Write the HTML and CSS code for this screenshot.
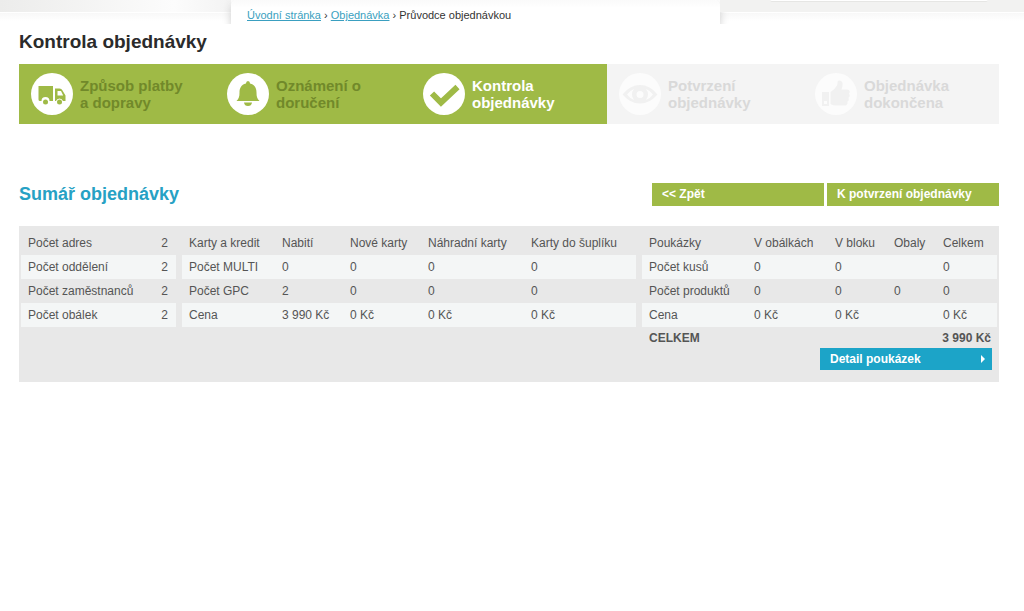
FILE: index.html
```
<!DOCTYPE html>
<html lang="cs">
<head>
<meta charset="utf-8">
<title>Kontrola objednávky</title>
<link rel="stylesheet" href="styles.css">
</head>
<body>
<header class="top">
  <div class="top-left"></div>
  <nav class="crumbs" aria-label="Drobečková navigace">
    <a href="#">Úvodní stránka</a> › <a href="#">Objednávka</a> › <span>Průvodce objednávkou</span>
  </nav>
  <div class="top-right"><div class="top-box"></div></div>
</header>
<main class="page">
  <h1 class="title">Kontrola objednávky</h1>
  <ol class="steps">
    <li class="step done">
      <svg class="icon" viewBox="0 0 42 42" aria-hidden="true">
        <circle cx="21" cy="21" r="21" fill="#fff"/>
        <path d="M7.500 13H22v15h-3.500a4 4 0 0 0-8 0H9q-1.500 0-1.500-1.500z" fill="#9fba46"/>
        <path fill-rule="evenodd" d="M24 15.500h4.500q2 0 3 2l3 5V28h-2.500a3.700 3.700 0 0 0-7 0h-1zM26.500 18v4.500h5.700L30 18z" fill="#9fba46"/>
        <circle cx="14.500" cy="29" r="2.500" fill="#9fba46"/>
        <circle cx="28.500" cy="29" r="2.500" fill="#9fba46"/>
      </svg>
      <span>Způsob platby<br>a dopravy</span>
    </li>
    <li class="step done">
      <svg class="icon" viewBox="0 0 42 42" aria-hidden="true">
        <circle cx="21" cy="21" r="21" fill="#fff"/>
        <path d="M21 8q2 0 2 2.500c5 1 6.500 5 6.500 9 0 4 .5 6 3 8.500H9.500c2.500-2.500 3-4.500 3-8.500 0-4 1.500-8 6.500-9Q19 8 21 8zM17 29.500h8q-.5 3.500-4 3.500t-4-3.500z" fill="#9fba46"/>
      </svg>
      <span>Oznámení o<br>doručení</span>
    </li>
    <li class="step current" aria-current="step">
      <svg class="icon" viewBox="0 0 42 42" aria-hidden="true">
        <circle cx="21" cy="21" r="21" fill="#fff"/>
        <path d="M9 20.500l9 9L34.500 14" fill="none" stroke="#9fba46" stroke-width="6"/>
      </svg>
      <span>Kontrola<br>objednávky</span>
    </li>
    <li class="step">
      <svg class="icon" viewBox="0 0 42 42" aria-hidden="true">
        <circle cx="21" cy="21" r="21" fill="#fcfcfc"/>
        <path d="M3.500 21.500Q11 12 21 12t17.500 9.500Q31 30.500 21 30.500T3.500 21.500z" fill="#f1f1f1"/>
        <path d="M8 21.500q3-4 7-5.500a8.500 8.500 0 0 0 0 11q-4-1.500-7-5.500zM34 21.500q-3-4-7-5.500a8.500 8.500 0 0 1 0 11q4-1.500 7-5.500z" fill="#fcfcfc"/>
        <circle cx="21" cy="21.500" r="3.500" fill="#fcfcfc"/>
      </svg>
      <span>Potvrzení<br>objednávky</span>
    </li>
    <li class="step">
      <svg class="icon" viewBox="0 0 42 42" aria-hidden="true">
        <circle cx="21" cy="21" r="21" fill="#fcfcfc"/>
        <path fill-rule="evenodd" d="M7 19h7v14H7zM9 28v3h3v-3z" fill="#f1f1f1"/>
        <path d="M15.500 19q4-2 6.500-6.500c1-2 0-5 2-5 4 0 4.500 4 2.500 9H32c3 0 3.500 3 1.800 4.200 1.500 1.300 1 3.300-.4 4 1 1.500.3 3.200-1 3.800.7 2-.5 4-2.400 4H21q-3 0-5.500-1.500z" fill="#f1f1f1"/>
      </svg>
      <span>Objednávka<br>dokončena</span>
    </li>
  </ol>

  <div class="summary-head">
    <h2 class="subtitle">Sumář objednávky</h2>
    <div class="actions">
      <button class="btn" type="button">&lt;&lt; Zpět</button>
      <button class="btn" type="button">K potvrzení objednávky</button>
    </div>
  </div>

  <section class="panel">
    <table class="grid counts">
      <tr><th scope="row">Počet adres</th><td>2</td></tr>
      <tr><th scope="row">Počet oddělení</th><td>2</td></tr>
      <tr><th scope="row">Počet zaměstnanců</th><td>2</td></tr>
      <tr><th scope="row">Počet obálek</th><td>2</td></tr>
    </table>
    <table class="grid cards">
      <colgroup><col class="c-label"><col class="c-load"><col class="c-new"><col class="c-spare"><col></colgroup>
      <tr><th scope="col">Karty a kredit</th><th scope="col">Nabití</th><th scope="col">Nové karty</th><th scope="col">Náhradní karty</th><th scope="col">Karty do šuplíku</th></tr>
      <tr><th scope="row">Počet MULTI</th><td>0</td><td>0</td><td>0</td><td>0</td></tr>
      <tr><th scope="row">Počet GPC</th><td>2</td><td>0</td><td>0</td><td>0</td></tr>
      <tr><th scope="row">Cena</th><td>3 990 Kč</td><td>0 Kč</td><td>0 Kč</td><td>0 Kč</td></tr>
    </table>
    <div class="vouchers">
      <table class="grid">
        <colgroup><col class="v-label"><col class="v-env"><col class="v-block"><col class="v-pack"><col></colgroup>
        <tr><th scope="col">Poukázky</th><th scope="col">V obálkách</th><th scope="col">V bloku</th><th scope="col">Obaly</th><th scope="col">Celkem</th></tr>
        <tr><th scope="row">Počet kusů</th><td>0</td><td>0</td><td></td><td>0</td></tr>
        <tr><th scope="row">Počet produktů</th><td>0</td><td>0</td><td>0</td><td>0</td></tr>
        <tr><th scope="row">Cena</th><td>0 Kč</td><td>0 Kč</td><td></td><td>0 Kč</td></tr>
      </table>
      <div class="total"><span>CELKEM</span><span>3 990 Kč</span></div>
      <button class="btn detail" type="button">Detail poukázek
        <svg class="arrow" viewBox="0 0 4 8" aria-hidden="true"><path d="M0 0l4 4-4 4z" fill="#fff"/></svg>
      </button>
    </div>
  </section>
</main>
</body>
</html>
```
FILE: styles.css
```
* {
  box-sizing: border-box;
}

body {
  margin: 0;
  background: #fff;
  color: #555;
  font-family: "Liberation Sans", Arial, sans-serif;
  font-size: 12px;
}

.top {
  display: grid;
  grid-template-columns: 231fr 489fr 304fr;
  height: 24px;
  overflow: hidden;
  background: linear-gradient(#fff 0, #fff 1px, #f8f8f8 1px, #fff 9px) 0 12px / 100% 12px no-repeat;
}

.top-left {
  height: 12px;
  background: linear-gradient(90deg, #ececeb, #fcfcfc 75%, #f3f3f3);
}

.top-right {
  height: 12px;
  padding: 0 36px 0 50px;
  background: #f2f2f1;
}

.top-box {
  height: 2px;
  border-bottom: 1px solid #e6e6e4;
  border-radius: 0 0 4px 4px;
  background: #fff;
}

.crumbs {
  height: 24px;
  padding-left: 16px;
  background: linear-gradient(#fafafa, #fff 8px);
  border-radius: 6px 6px 0 0;
  box-shadow: 0 4px 8px #ccc;
  color: #333;
  font-size: 11px;
  line-height: 30px;
  white-space: nowrap;
}

.crumbs a {
  color: #3a9fc0;
}

.page {
  padding: 0 25px 0 19px;
}

.title,
.subtitle {
  margin: 0;
  line-height: 24px;
}

.title {
  padding: 6px 0 10px;
  color: #2b2b2b;
  font-size: 19px;
}

.subtitle {
  color: #26a1c4;
  font-size: 18px;
}

.steps {
  display: grid;
  grid-template-columns: repeat(5, 1fr);
  margin: 0;
  padding: 0;
  list-style: none;
}

.step {
  display: flex;
  align-items: center;
  gap: 7px;
  height: 60px;
  padding-left: 12px;
  background: #f4f4f4;
  color: #d9d9d9;
  font-size: 15px;
  font-weight: bold;
  line-height: 17px;
}

.step.done {
  background: #9fba46;
  color: #71892a;
}

.step.current {
  background: #9fba46;
  color: #fff;
}

.icon {
  flex: none;
  width: 42px;
  height: 42px;
}

.summary-head {
  display: flex;
  justify-content: space-between;
  align-items: center;
  margin: 58px 0 20px;
}

.actions {
  display: flex;
  gap: 3px;
}

.btn {
  width: 172px;
  height: 23px;
  padding: 0 10px;
  border: 0;
  background: #9fba46;
  color: #fff;
  font: bold 12px "Liberation Sans", Arial, sans-serif;
  text-align: left;
  white-space: nowrap;
}

.panel {
  display: grid;
  grid-template-columns: 155fr 454fr 355fr;
  align-items: start;
  gap: 6px;
  padding: 5px 2px 12px;
  background: #e8e8e8;
}

.grid {
  width: 100%;
  table-layout: fixed;
  border-collapse: collapse;
}

.grid th,
.grid td {
  height: 24px;
  padding: 0 0 0 7px;
  font-weight: normal;
  text-align: left;
  white-space: nowrap;
}

.grid tr:nth-child(even) {
  background: #f4f6f6;
}

.counts th {
  width: 80%;
}

.grid.counts td {
  padding-right: 8px;
  text-align: right;
}

.c-label { width: 93px; }
.c-load { width: 68px; }
.c-new { width: 78px; }
.c-spare { width: 103px; }

.v-label { width: 105px; }
.v-env { width: 81px; }
.v-block { width: 59px; }
.v-pack { width: 49px; }

.total {
  display: flex;
  justify-content: space-between;
  padding: 2px 6px 0 7px;
  font-weight: bold;
  line-height: 19px;
}

.detail {
  display: flex;
  justify-content: space-between;
  align-items: center;
  height: 22px;
  margin: 0 5px 0 auto;
  padding-right: 7px;
  background: #1ca4c8;
}

.arrow {
  width: 4px;
  height: 8px;
}
```
